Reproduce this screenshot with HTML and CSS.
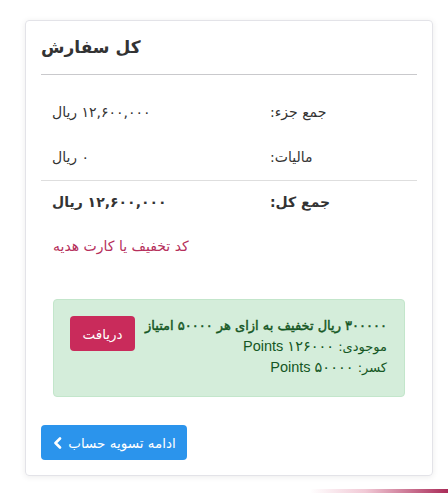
FILE: index.html
```html
<!DOCTYPE html>
<html lang="fa" dir="rtl">
<head>
<meta charset="utf-8">
<link rel="stylesheet" href="styles.css">
</head>
<body>
<div class="card">
  <h3 class="title">کل سفارش</h3>
  <div class="totals">
    <div class="row">
      <div class="label">جمع جزء:</div>
      <div class="value">۱۲,۶۰۰,۰۰۰ ریال</div>
    </div>
    <div class="row">
      <div class="label">مالیات:</div>
      <div class="value">۰ ریال</div>
    </div>
    <div class="row total">
      <div class="label">جمع کل:</div>
      <div class="value">۱۲,۶۰۰,۰۰۰ ریال</div>
    </div>
  </div>
  <div class="coupon"><a href="#">کد تخفیف یا کارت هدیه</a></div>
  <div class="alert">
    <div class="alert-text">
      <div class="alert-title">۳۰۰۰۰۰ ریال تخفیف به ازای هر ۵۰۰۰۰ امتیاز</div>
      <div>موجودی: <span class="num">۱۲۶۰۰۰ Points</span></div>
      <div>کسر: <span class="num">۵۰۰۰۰ Points</span></div>
    </div>
    <button class="btn-get">دریافت</button>
  </div>
  <div class="actions">
    <button class="btn-continue">ادامه تسویه حساب
      <svg width="11" height="12" viewBox="0 0 11 12"><path d="M8 1.5 L3.5 6 L8 10.5" fill="none" stroke="#fff" stroke-width="2.6" stroke-linecap="round" stroke-linejoin="round"/></svg>
    </button>
  </div>
</div>
<div class="deco"></div>
</body>
</html>
```
FILE: styles.css
```css
html, body {
  margin: 0;
  padding: 0;
  background: #fff;
}
body {
  font-family: "DejaVu Sans", "Noto Sans", sans-serif;
  color: #333;
  font-size: 14px;
  position: relative;
  height: 494px;
  overflow: hidden;
}
.card {
  margin: 20px 15px 0 25px;
  width: 408px;
  box-sizing: border-box;
  height: 456px;
  border: 1px solid #e3e3e8;
  border-radius: 4px;
  box-shadow: 0 1px 6px rgba(0,0,0,0.08);
  padding: 15px;
}
.title {
  margin: 0;
  font-size: 17px;
  font-weight: bold;
  line-height: 22px;
  padding-bottom: 16px;
  border-bottom: 1px solid #c9c9cc;
  color: #333;
  text-align: left;
}
.totals {
  margin-top: 15px;
}
.row {
  display: flex;
  line-height: 21px;
  padding: 12px 0;
}
.row.total {
  border-top: 1px solid #dedede;
  padding-top: 11px;
}
.label {
  width: 155px;
  text-align: left;
  padding-left: 8px;
  box-sizing: border-box;
}
.value {
  flex: 1;
  text-align: left;
  padding-left: 11px;
}
.total .label, .total .value {
  font-weight: bold;
}
.coupon {
  text-align: left;
  padding-left: 12px;
  line-height: 22px;
  margin-top: 10px;
}
.coupon a {
  color: #b6305c;
  text-decoration: none;
}
.alert {
  margin: 42px 12px 0 12px;
  background: #d4edda;
  border: 1px solid #c3e6cb;
  border-radius: 4px;
  color: #155724;
  padding: 15px 17px 18px 16px;
  display: flex;
  justify-content: space-between;
  align-items: flex-start;
  gap: 3px;
  line-height: 21px;
  font-size: 13px;
}
.alert-text {
  min-width: 0;
}
.alert-title {
  font-weight: normal;
  -webkit-text-stroke: 0.45px #155724;
  font-size: 13px;
  white-space: nowrap;
}
.num {
  font-family: "Liberation Sans", "DejaVu Sans", sans-serif;
  font-size: 14.5px;
}
.btn-get {
  flex-shrink: 0;
  margin-top: 1px;
  background: #c92b5b;
  color: #fff;
  border: none;
  border-radius: 4px;
  font-family: inherit;
  font-size: 13.5px;
  width: 65px;
  height: 35px;
  padding: 0;
}
.actions {
  margin-top: 28px;
  display: flex;
  justify-content: flex-end;
}
.btn-continue {
  background: #2b94ec;
  color: #fff;
  border: none;
  border-radius: 4px;
  font-family: inherit;
  font-size: 13.5px;
  height: 35px;
  width: 146px;
  padding: 0 10px;
  display: flex;
  align-items: center;
  justify-content: center;
  gap: 5px;
}
.deco {
  position: absolute;
  left: 310px;
  right: 0;
  top: 489px;
  height: 4px;
  background: linear-gradient(to right, rgba(200,40,90,0), rgba(200,40,90,0.25) 40%, rgba(160,20,70,0.9));
  border-radius: 2px 0 0 2px;
}
```
